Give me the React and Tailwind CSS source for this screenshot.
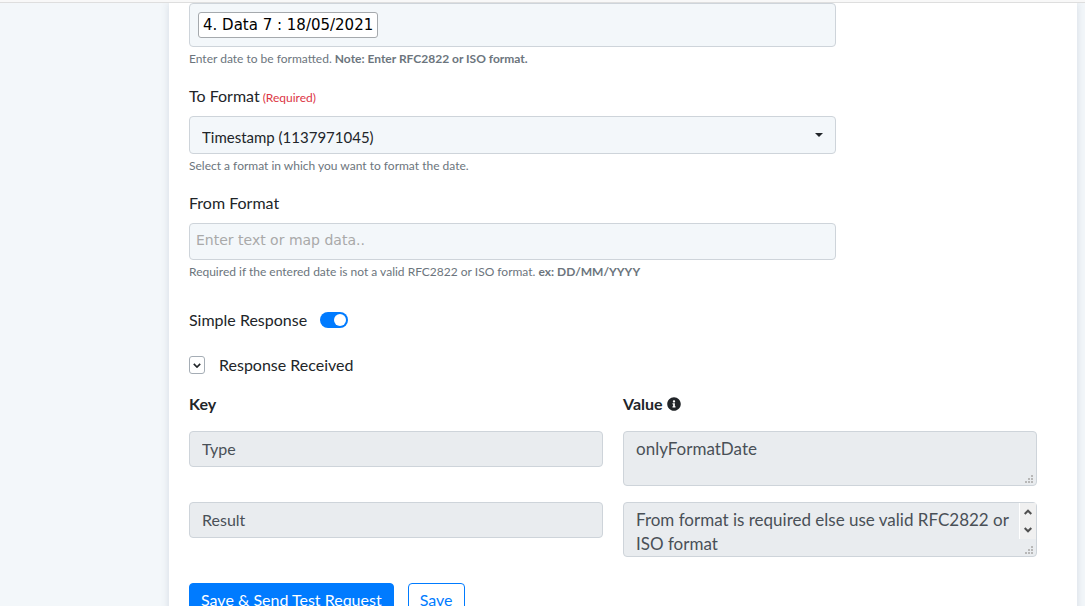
import { useState } from 'react';

const responseRows = [
    { key: 'Type', value: 'onlyFormatDate', scroll: false },
    { key: 'Result', value: 'From format is required else use valid RFC2822 or ISO format', scroll: true },
];

const Hint = ({ id, text, strong }) => (
    <p id={id} className="mt-[3px] text-[12px] leading-[18px] text-[#6c757d]">
        {text} {strong && <strong className="font-bold">{strong}</strong>}
    </p>
);

const InfoIcon = () => (
    <svg viewBox="0 0 512 512" className="h-[14px] w-[14px]" fill="#212529" aria-hidden="true">
        <path d="M256 8C119 8 8 119 8 256s111 248 248 248 248-111 248-248S393 8 256 8zm0 110c23 0 42 19 42 42s-19 42-42 42-42-19-42-42 19-42 42-42zm56 254c0 7-5 12-12 12h-88c-7 0-12-5-12-12v-24c0-7 5-12 12-12h12v-64h-12c-7 0-12-5-12-12v-24c0-7 5-12 12-12h64c7 0 12 5 12 12v100h12c7 0 12 5 12 12v24z" />
    </svg>
);

// Resize grip in the corner of a textarea
const Grip = () => (
    <svg viewBox="0 0 8 8" className="absolute right-1 bottom-[3px] h-2 w-2" fill="#b8b8b8" shapeRendering="crispEdges" aria-hidden="true">
        <path d="M6 0h2v2H6zM3 3h2v2H3zM6 3h2v2H6zM0 6h2v2H0zM3 6h2v2H3zM6 6h2v2H6z" />
    </svg>
);

const ScrollArrows = () => (
    <div className="absolute top-px right-px flex h-[36px] w-[17px] flex-col items-center justify-between border-l border-white bg-[#f0f0f0] py-[6px]">
        <svg viewBox="0 0 8 6" className="h-[6px] w-2" fill="none" stroke="#505050" strokeWidth="2" aria-hidden="true">
            <path d="M.7 5L4 1.7 7.3 5" />
        </svg>
        <svg viewBox="0 0 8 6" className="h-[6px] w-2" fill="none" stroke="#505050" strokeWidth="2" aria-hidden="true">
            <path d="M.7 1L4 4.3 7.3 1" />
        </svg>
    </div>
);

const ResponseRow = ({ row }) => (
    <>
        <input
            aria-label={`${row.key} key`}
            className="h-[36px] w-full rounded border border-[#ced4da] bg-[#e9ecef] px-3 pb-[2px] text-[16px] text-[#495057]"
            defaultValue={row.key}
            readOnly
        />
        <div className="relative">
            <textarea
                aria-label={`${row.key} value`}
                className="block h-[55px] w-full resize-none overflow-hidden rounded border border-[#ced4da] bg-[#e9ecef] pt-[5px] pr-5 pl-3 text-[17px] leading-[24px] text-[#495057]"
                defaultValue={row.value}
                readOnly
            />
            {row.scroll && <ScrollArrows />}
            <Grip />
        </div>
    </>
);

export default function App() {
    const [simple, setSimple] = useState(true);

    return (
        <div className="flex h-screen flex-col overflow-hidden bg-[#f3f7fa] font-['Lato','Liberation_Sans',sans-serif] text-[16px] leading-[24px] text-[#212529]">
            <header className="relative z-10 h-[3px] shrink-0 border-b border-[#dedede] bg-[#f8f8f8]" />
            <main className="mr-2 ml-[169px] grow bg-white pr-10 pl-5 shadow-[0_0_8px_rgba(60,80,110,0.16)]">
                <form className="flex flex-col" onSubmit={(e) => e.preventDefault()}>
                    <div className="w-full max-w-[647px]">
                        <div className="flex h-[44px] items-center rounded border border-[#ced4da] bg-[#f3f7fa] px-2">
                            <span className="rounded-[3px] border border-[#a5a9ad] bg-white px-1 font-['DejaVu_Sans',sans-serif] text-[15px] leading-[24px] text-black">
                                4. Data 7 : 18/05/2021
                            </span>
                        </div>
                        <Hint text="Enter date to be formatted." strong="Note: Enter RFC2822 or ISO format." />
                    </div>

                    <div className="mt-4 w-full max-w-[647px]">
                        <label htmlFor="to-format" className="mb-2 flex h-6 items-baseline gap-[3px]">
                            To Format <span className="text-[12px] text-[#dc3545]">(Required)</span>
                        </label>
                        <div className="relative">
                            <select
                                id="to-format"
                                aria-describedby="to-format-hint"
                                className="block h-[38px] w-full appearance-none rounded border border-[#ced4da] bg-[#f3f7fa] px-3 pt-[3px] text-[15px]"
                            >
                                <option>Timestamp (1137971045)</option>
                            </select>
                            <svg viewBox="0 0 8 4" className="pointer-events-none absolute top-[17px] right-[13px] h-1 w-2" fill="#212529" aria-hidden="true">
                                <path d="M0 0h8L4 4z" />
                            </svg>
                        </div>
                        <Hint id="to-format-hint" text="Select a format in which you want to format the date." />
                    </div>

                    <div className="mt-4 w-full max-w-[647px]">
                        <label htmlFor="from-format" className="mb-2 block">
                            From Format
                        </label>
                        <input
                            id="from-format"
                            aria-describedby="from-format-hint"
                            placeholder="Enter text or map data.."
                            className="block h-[37px] w-full rounded border border-[#ced4da] bg-[#f3f7fa] px-[6px] pb-1 font-['DejaVu_Sans',sans-serif] text-[14px] placeholder:text-[#a9a9a9]"
                        />
                        <Hint id="from-format-hint" text="Required if the entered date is not a valid RFC2822 or ISO format." strong="ex: DD/MM/YYYY" />
                    </div>

                    <label className="mt-[27px] flex items-center gap-[13px] self-start">
                        Simple Response
                        <input type="checkbox" role="switch" className="peer sr-only" checked={simple} onChange={() => setSimple(!simple)} />
                        <span className="flex h-4 w-7 items-center rounded-full bg-[#adb5bd] p-[2px] peer-checked:justify-end peer-checked:bg-[#007bff]">
                            <span className="h-3 w-3 rounded-full bg-white" />
                        </span>
                    </label>

                    <div className="mt-[21px] flex items-center gap-[14px]">
                        <button
                            type="button"
                            aria-label="Toggle response"
                            className="flex h-[18px] w-4 items-center justify-center rounded-[3px] border border-[#a5adb5] bg-white"
                        >
                            <svg viewBox="0 0 10 6" className="h-[5px] w-2" fill="none" stroke="#212529" strokeWidth="2" aria-hidden="true">
                                <path d="M1 1l4 4 4-4" />
                            </svg>
                        </button>
                        <span>Response Received</span>
                    </div>

                    <div className="mt-[15px] grid grid-cols-2 items-start gap-x-5 font-bold">
                        <span>Key</span>
                        <span className="flex items-center gap-1">
                            Value <InfoIcon />
                        </span>
                    </div>
                    <div className="mt-[15px] grid grid-cols-2 items-start gap-x-5 gap-y-4">
                        {responseRows.map((row) => (
                            <ResponseRow key={row.key} row={row} />
                        ))}
                    </div>

                    <div className="mt-[26px] flex gap-[14px]">
                        <button type="submit" className="h-[38px] rounded border border-[#007bff] bg-[#007bff] px-[11px] pb-1 text-white">
                            Save &amp; Send Test Request
                        </button>
                        <button type="button" className="h-[38px] rounded border border-[#007bff] bg-white px-[11px] pb-1 text-[#007bff]">
                            Save
                        </button>
                    </div>
                </form>
            </main>
        </div>
    );
}
